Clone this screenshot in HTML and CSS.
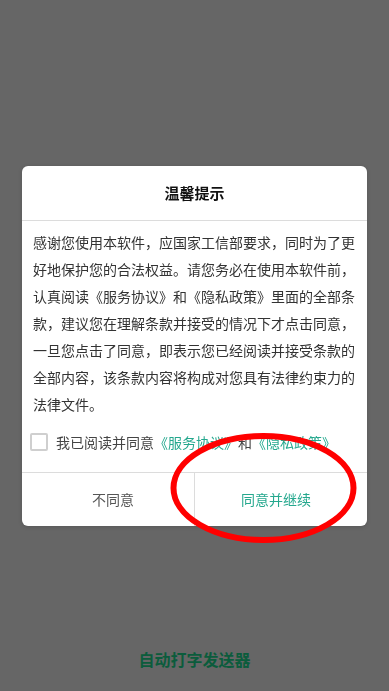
FILE: index.html
```html
<!DOCTYPE html>
<html lang="zh">
<head>
<meta charset="utf-8">
<title>温馨提示</title>
<link rel="stylesheet" href="styles.css">
</head>
<body>
<div class="app">
  <div class="app-main"></div>
  <div class="app-title">自动打字发送器</div>
</div>
<div class="overlay">
  <div class="dialog">
    <div class="dialog-head">温馨提示</div>
    <div class="dialog-body">感谢您使用本软件，应国家工信部要求，同时为了更好地保护您的合法权益。请您务必在使用本软件前，认真阅读《服务协议》和《隐私政策》里面的全部条款，建议您在理解条款并接受的情况下才点击同意，一旦您点击了同意，即表示您已经阅读并接受条款的全部内容，该条款内容将构成对您具有法律约束力的法律文件。</div>
    <div class="agree-row">
      <span class="checkbox"></span>
      <span class="agree-text">我已阅读并同意<span class="link">《服务协议》</span>和<span class="link">《隐私政策》</span></span>
    </div>
    <div class="dialog-foot">
      <div class="btn btn-cancel">不同意</div>
      <div class="btn btn-ok">同意并继续</div>
    </div>
  </div>
  <svg class="mark" width="200" height="120" viewBox="0 0 200 120">
    <ellipse cx="98.5" cy="60" rx="90" ry="52" fill="none" stroke="#ff0000" stroke-width="6"/>
  </svg>
</div>
</body>
</html>
```
FILE: styles.css
```css
* { box-sizing: border-box; }
html, body { margin: 0; padding: 0; }
body {
  width: 389px;
  height: 691px;
  background: #666666;
  font-family: "Noto Sans CJK SC", "Noto Sans", sans-serif;
  overflow: hidden;
}
.app {
  height: 691px;
  display: flex;
  flex-direction: column;
}
.app-main { flex: 1; }
.app-title {
  text-align: center;
  font-size: 16px;
  font-weight: bold;
  color: #0b5c3c;
  line-height: 22px;
  padding-bottom: 21px;
}
.overlay {
  position: fixed;
  inset: 0;
  display: flex;
  align-items: center;
  justify-content: center;
}
.dialog {
  width: 345px;
  background: #ffffff;
  border-radius: 6px;
  overflow: hidden;
  box-shadow: 0 1px 4px rgba(0,0,0,0.15);
}
.dialog-head {
  height: 55px;
  border-bottom: 1px solid #dcdcdc;
  display: flex;
  align-items: center;
  justify-content: center;
  font-size: 15px;
  font-weight: bold;
  color: #111;
}
.dialog-body {
  padding: 8px 12px 0 11px;
  font-size: 14px;
  line-height: 27px;
  color: #333;
}
.agree-row {
  display: flex;
  align-items: center;
  height: 28px;
  margin: 10px 0 16px;
  padding-left: 8px;
  gap: 8px;
}
.checkbox {
  width: 18px;
  height: 18px;
  border: 2px solid #cfcfcf;
  border-radius: 2px;
}
.agree-text {
  font-size: 14px;
  color: #444;
}
.link { color: #25a88e; }
.dialog-foot {
  display: flex;
  border-top: 1px solid #dcdcdc;
  height: 54px;
}
.btn {
  flex: 1;
  display: flex;
  align-items: center;
  justify-content: center;
  font-size: 14px;
}
.btn-cancel { color: #555; border-right: 1px solid #dcdcdc; padding-left: 10px; }
.btn-ok { color: #25a88e; padding-right: 10px; }
.mark {
  position: absolute;
  left: 165px;
  top: 428px;
}
```
